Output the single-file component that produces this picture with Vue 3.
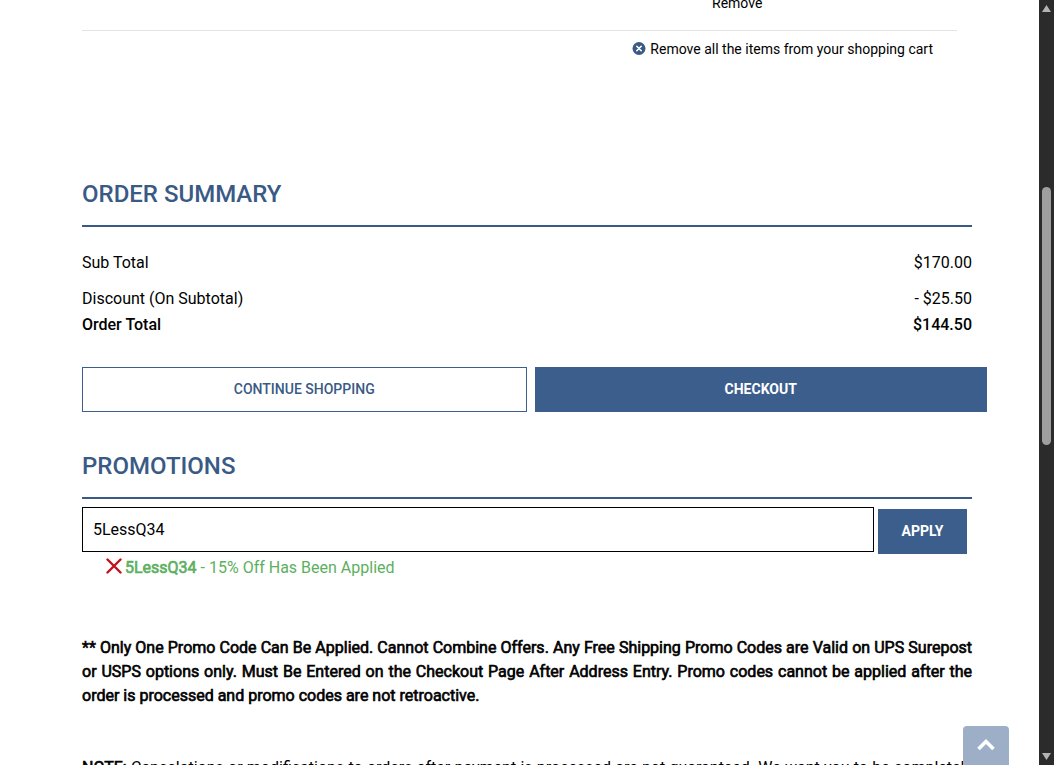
<script setup>
import { ref } from 'vue'

const promoCode = ref('5LessQ34')
const totals = [
  { label: 'Sub Total', value: '$170.00', kind: 'sub' },
  { label: 'Discount (On Subtotal)', value: '- $25.50', kind: 'discount' },
  { label: 'Order Total', value: '$144.50', kind: 'total' }
]
</script>

<template>
  <div class="viewport">
    <main class="page">
      <section class="cart-end">
        <div class="item-row"><a href="#">Remove</a></div>
        <a class="remove-all" href="#">
          <svg class="remove-icon" viewBox="0 0 14 14" aria-hidden="true">
            <circle cx="7" cy="6.5" r="6.5" fill="#3a5a86" />
            <path d="M4.8 4.3L9.2 8.7M9.2 4.3L4.8 8.7" stroke="#fff" stroke-width="1.6" stroke-linecap="round" />
          </svg>
          <span>Remove all the items from your shopping cart</span>
        </a>
      </section>

      <section class="summary">
        <h2>ORDER SUMMARY</h2>
        <dl>
          <div v-for="row in totals" :key="row.label" class="total-row" :class="row.kind">
            <dt>{{ row.label }}</dt>
            <dd>{{ row.value }}</dd>
          </div>
        </dl>
        <div class="actions">
          <button class="outline" type="button">CONTINUE SHOPPING</button>
          <button class="solid" type="button">CHECKOUT</button>
        </div>
      </section>

      <section class="promotions">
        <h2>PROMOTIONS</h2>
        <form class="promo-form" @submit.prevent>
          <input v-model="promoCode" type="text" aria-label="Promo code" />
          <button class="solid apply" type="submit">APPLY</button>
        </form>
        <div class="applied">
          <button class="clear" type="button" aria-label="Remove promo code">
            <svg viewBox="0 0 16 16" aria-hidden="true">
              <path d="M1.5 1.5L14.5 14.5M14.5 1.5L1.5 14.5" fill="none" stroke="#c4101c" stroke-width="2.4" stroke-linecap="round" />
            </svg>
          </button>
          <p><b>5LessQ34</b> - 15% Off Has Been Applied</p>
        </div>
      </section>

      <p class="terms">
        ** Only One Promo Code Can Be Applied. Cannot Combine Offers. Any Free Shipping Promo Codes are Valid on UPS Surepost or USPS options only. Must Be Entered on the Checkout Page After Address Entry. Promo codes cannot be applied after the order is processed and promo codes are not retroactive.
      </p>
      <p class="note"><b>NOTE:</b> Cancelations or modifications to orders after payment is processed are not guaranteed. We want you to be completely</p>
    </main>

    <button class="to-top" type="button" aria-label="Back to top">
      <svg viewBox="0 0 20 14" aria-hidden="true">
        <path d="M2.5 11L10 3.5L17.5 11" fill="none" stroke="#fff" stroke-width="3.6" />
      </svg>
    </button>

    <div class="scrollbar" aria-hidden="true">
      <svg viewBox="0 0 9 7"><path d="M4.5 0L9 7H0Z" fill="#b4b4b4" /></svg>
      <div class="track"><div class="thumb"></div></div>
      <svg viewBox="0 0 9 7"><path d="M0 0H9L4.5 7Z" fill="#b4b4b4" /></svg>
    </div>
  </div>
</template>

<style>
body {
  background: #fff;
}
</style>

<style scoped>
.viewport {
  position: relative;
  display: flex;
  height: 100vh;
  overflow: hidden;
  color: #000;
  font: 400 16px/24px Roboto, "Liberation Sans", sans-serif;
}
.page {
  flex: 1;
  min-width: 0;
  padding: 0 67px 0 82px;
}
h2, p, dl, dd {
  margin: 0;
}
a {
  color: inherit;
  text-decoration: none;
}
button {
  font: inherit;
  cursor: pointer;
}
.cart-end {
  display: flex;
  flex-direction: column;
  margin-right: 15px;
  font-size: 14px;
}
.item-row {
  height: 30px;
  padding-left: 72%;
  border-bottom: 1px solid #e3e3e3;
  line-height: 6px;
}
.remove-all {
  display: flex;
  align-items: center;
  align-self: flex-end;
  gap: 4px;
  margin: 6px 24px 0 0;
}
.remove-icon {
  width: 14px;
  height: 14px;
}
.summary {
  margin-top: 117px;
}
h2 {
  height: 47px;
  border-bottom: 2px solid #3a5a86;
  color: #3a5a86;
  font-size: 24px;
  font-weight: 500;
  line-height: 32px;
}
dl {
  padding-top: 24px;
}
.total-row {
  display: flex;
  justify-content: space-between;
}
.sub {
  margin-bottom: 12px;
}
.total {
  margin-top: 2px;
  font-weight: 500;
}
.actions {
  display: flex;
  gap: 8px;
  margin: 30px -15px 0 0;
}
.outline, .solid {
  box-sizing: border-box;
  height: 45px;
  padding: 0 8px 2px;
  border: 1px solid #3b5e8c;
  font-size: 14px;
  font-weight: 500;
}
.outline {
  flex: 0 0 calc(50% - 8px);
  background: #fff;
  color: #3a5a86;
}
.solid {
  flex: 1;
  background: #3b5e8c;
  color: #fff;
  font-weight: 700;
}
.promotions {
  margin-top: 38px;
}
.promo-form {
  display: flex;
  gap: 4px;
  padding: 8px 5px 0 0;
}
input {
  box-sizing: border-box;
  flex: 1;
  min-width: 0;
  height: 45px;
  padding: 0 10px;
  border: 1px solid #000;
  border-radius: 0;
  background: #fff;
  color: #000;
  font: inherit;
}
.apply {
  flex: 0 0 89px;
  margin-top: 2px;
}
.applied {
  display: flex;
  gap: 3px;
  margin-top: 2px;
  padding-left: 24px;
  color: #5cb060;
}
.clear {
  display: flex;
  padding: 2px 0 0;
  border: 0;
  background: none;
}
.clear svg {
  width: 16px;
  height: 16px;
}
.applied b, .terms, .note b {
  font-weight: 400;
  -webkit-text-stroke: 0.04em currentColor;
}
.terms {
  margin-top: 56px;
  text-align: justify;
}
.note {
  margin-top: 48px;
  text-align: justify;
  text-align-last: justify;
}
.to-top {
  position: absolute;
  right: 45px;
  bottom: -7px;
  display: flex;
  justify-content: center;
  width: 46px;
  height: 46px;
  padding: 12px 0 0;
  border: 0;
  border-radius: 4px;
  background: #9dafc6;
}
.to-top svg {
  width: 20px;
  height: 14px;
}
.scrollbar {
  display: flex;
  flex-direction: column;
  align-items: center;
  width: 15px;
  padding: 5px 0;
  box-sizing: border-box;
  background: #2b2b2b;
}
.scrollbar svg {
  width: 9px;
  height: 7px;
}
.track {
  display: flex;
  flex: 1;
  flex-direction: column;
}
.track::before {
  content: "";
  flex: 175;
}
.track::after {
  content: "";
  flex: 308;
}
.thumb {
  flex: 258;
  width: 9px;
  border-radius: 5px;
  background: #9f9f9f;
}
</style>
